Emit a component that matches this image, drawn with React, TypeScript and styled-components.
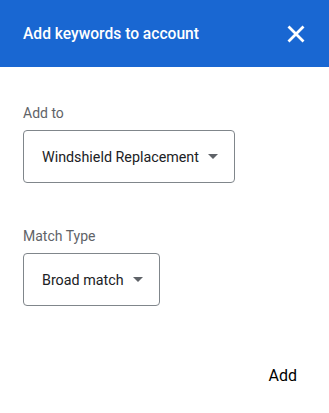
import React from 'react';
import styled, { createGlobalStyle } from 'styled-components';

const GlobalStyle = createGlobalStyle`
  body {
    margin: 0;
    background: #ffffff;
    font-family: Roboto, "Liberation Sans", Arial, sans-serif;
  }
`;

const Dialog = styled.div`
  width: 329px;
  height: 413px;
  display: flex;
  flex-direction: column;
  background: #ffffff;
`;

const Header = styled.header`
  height: 67px;
  display: flex;
  align-items: center;
  justify-content: space-between;
  padding: 0 24px 0 23px;
  background: #1967d2;
  color: #ffffff;
  box-sizing: border-box;
`;

const Title = styled.h1`
  margin: 0;
  font-size: 15.6px;
  font-weight: 500;
`;

const CloseButton = styled.button`
  background: none;
  border: none;
  padding: 0;
  width: 18px;
  height: 18px;
  display: flex;
  cursor: pointer;
`;

const Body = styled.div`
  flex: 1;
  display: flex;
  flex-direction: column;
  padding: 36px 23px 0;
`;

const Field = styled.div<{ gap?: number }>`
  display: flex;
  flex-direction: column;
  align-items: flex-start;
  margin-bottom: ${p => p.gap ?? 0}px;
`;

const Label = styled.label`
  font-size: 14px;
  line-height: 20px;
  color: #5f6368;
  margin-bottom: 7px;
`;

const Select = styled.button`
  height: 53px;
  display: flex;
  align-items: center;
  gap: 9px;
  padding: 0 16px 0 18px;
  border: 1px solid #80868b;
  border-radius: 4px;
  background: #ffffff;
  font-family: inherit;
  font-size: 14.3px;
  color: #202124;
  box-sizing: border-box;
  cursor: pointer;
`;

const Caret = styled.span`
  width: 0;
  height: 0;
  border-left: 5px solid transparent;
  border-right: 5px solid transparent;
  border-top: 5px solid #5f6368;
`;

const Footer = styled.div`
  display: flex;
  justify-content: flex-end;
  padding: 0 24px 0 0;
  margin-top: auto;
  margin-bottom: 20px;
`;

const TextButton = styled.button`
  background: none;
  border: none;
  padding: 8px;
  font-family: inherit;
  font-size: 16px;
  font-weight: 400;
  color: #000000;
  cursor: pointer;
`;

const App: React.FC = () => (
  <>
    <GlobalStyle />
    <Dialog>
      <Header>
        <Title>Add keywords to account</Title>
        <CloseButton aria-label="Close">
          <svg width="18" height="18" viewBox="0 0 18 18">
            <path d="M1.5 1.5 L16.5 16.5 M16.5 1.5 L1.5 16.5" stroke="#fff" strokeWidth="2.8" />
          </svg>
        </CloseButton>
      </Header>
      <Body>
        <Field gap={43}>
          <Label>Add to</Label>
          <Select>
            Windshield Replacement
            <Caret />
          </Select>
        </Field>
        <Field>
          <Label>Match Type</Label>
          <Select>
            Broad match
            <Caret />
          </Select>
        </Field>
      </Body>
      <Footer>
        <TextButton>Add</TextButton>
      </Footer>
    </Dialog>
  </>
);

export default App;
